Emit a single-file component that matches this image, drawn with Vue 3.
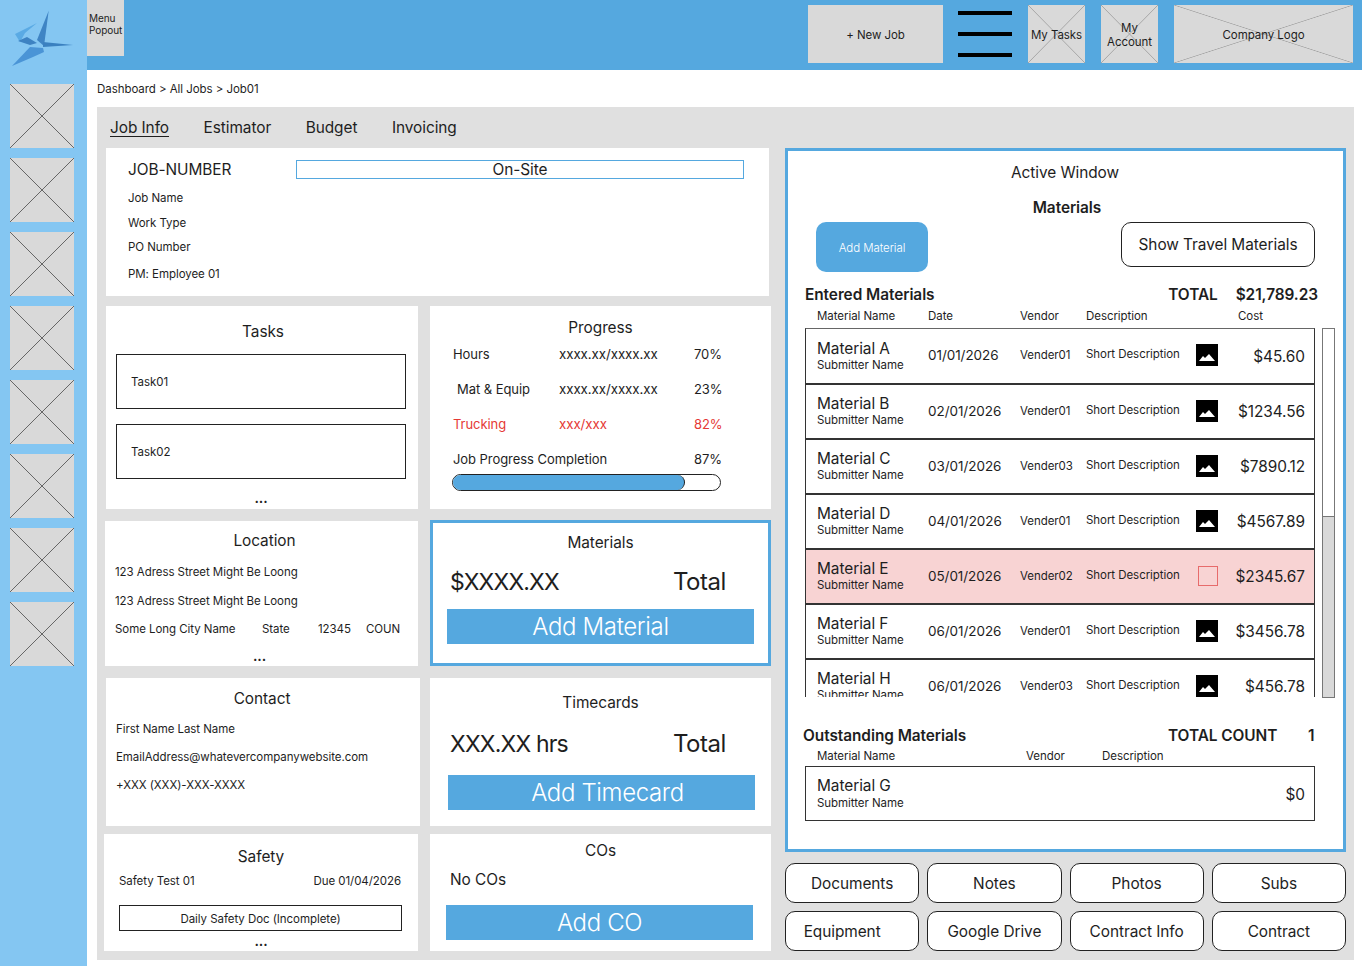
<script setup>
const tiles = Array.from({ length: 8 }, (_, i) => i)
const tabs = ['Job Info', 'Estimator', 'Budget', 'Invoicing']
const progress = [
  { label: 'Hours', value: 'xxxx.xx/xxxx.xx', pct: '70%' },
  { label: 'Mat & Equip', value: 'xxxx.xx/xxxx.xx', pct: '23%', indent: true },
  { label: 'Trucking', value: 'xxx/xxx', pct: '82%', alert: true }
]
const materials = [
  { name: 'Material A', date: '01/01/2026', vendor: 'Vender01', cost: '$45.60' },
  { name: 'Material B', date: '02/01/2026', vendor: 'Vender01', cost: '$1234.56' },
  { name: 'Material C', date: '03/01/2026', vendor: 'Vender03', cost: '$7890.12' },
  { name: 'Material D', date: '04/01/2026', vendor: 'Vender01', cost: '$4567.89' },
  { name: 'Material E', date: '05/01/2026', vendor: 'Vender02', cost: '$2345.67', flagged: true },
  { name: 'Material F', date: '06/01/2026', vendor: 'Vender01', cost: '$3456.78' },
  { name: 'Material H', date: '06/01/2026', vendor: 'Vender03', cost: '$456.78' }
]
const links = ['Documents', 'Notes', 'Photos', 'Subs', 'Equipment', 'Google Drive', 'Contract Info', 'Contract']
const completion = 87
</script>

<template>
  <div class="shell">
    <aside class="sidebar">
      <svg class="logo" width="87" height="84" viewBox="0 0 87 84">
        <polygon points="37,23 15,34 20,42 25,33" fill="#5aaae4" />
        <polygon points="18,41 27,37 37,43 30,45" fill="#3d82c2" />
        <polygon points="48.7,10.7 37,40 44,46" fill="#3f84c4" />
        <polygon points="43,42 73,45 43,47" fill="#3a80c0" />
        <polygon points="12,66 30,47 43,48 44,52 33,57" fill="#4a94d6" />
      </svg>
      <div class="tiles">
        <div v-for="t in tiles" :key="t" class="tile x-dark"></div>
      </div>
    </aside>

    <div class="main">
      <header class="topbar">
        <div class="popout">Menu<br />Popout</div>
        <div class="new-job">+ New Job</div>
        <div class="burger"><i></i><i></i><i></i></div>
        <div class="ph x-light">My Tasks</div>
        <div class="ph x-light">My<br />Account</div>
        <div class="ph company x-light">Company Logo</div>
      </header>

      <div class="crumbs">Dashboard &gt; All Jobs &gt; Job01</div>

      <section class="panel">
        <div class="left">
          <nav class="tabs">
            <span v-for="(t, i) in tabs" :key="t" :class="{ active: i === 0 }">{{ t }}</span>
          </nav>

          <div class="card job">
            <div class="job-head">
              <div class="job-number">JOB-NUMBER</div>
              <div class="status">On-Site</div>
            </div>
            <div class="job-line l1">Job Name</div>
            <div class="job-line l2">Work Type</div>
            <div class="job-line l3">PO Number</div>
            <div class="job-line l4">PM: Employee 01</div>
          </div>

          <div class="row row-a">
            <div class="card tasks">
              <div class="title">Tasks</div>
              <div class="task first">Task01</div>
              <div class="task second">Task02</div>
              <div class="dots">...</div>
            </div>
            <div class="card progress">
              <div class="title">Progress</div>
              <div v-for="p in progress" :key="p.label" class="p-row" :class="{ alert: p.alert }">
                <span class="p-label" :class="{ indent: p.indent }">{{ p.label }}</span>
                <span class="p-val">{{ p.value }}</span>
                <span>{{ p.pct }}</span>
              </div>
              <div class="p-row">
                <span class="p-wide">Job Progress Completion</span>
                <span>{{ completion }}%</span>
              </div>
              <div class="bar"><div class="fill" :style="{ width: completion + '%' }"></div></div>
            </div>
          </div>

          <div class="row row-b">
            <div class="card location">
              <div class="title">Location</div>
              <div class="line">123 Adress Street Might Be Loong</div>
              <div class="line">123 Adress Street Might Be Loong</div>
              <div class="line city">
                <span class="c1">Some Long City Name</span>
                <span class="c2">State</span>
                <span class="c3">12345</span>
                <span>COUN</span>
              </div>
              <div class="dots">...</div>
            </div>
            <div class="card summary mats">
              <div class="title">Materials</div>
              <div class="value-row"><span class="val">$XXXX.XX</span><span>Total</span></div>
              <div class="cta">Add Material</div>
            </div>
          </div>

          <div class="row row-c">
            <div class="card contact">
              <div class="title">Contact</div>
              <div class="line">First Name Last Name</div>
              <div class="line">EmailAddress@whatevercompanywebsite.com</div>
              <div class="line">+XXX (XXX)-XXX-XXXX</div>
            </div>
            <div class="card summary times">
              <div class="title">Timecards</div>
              <div class="value-row"><span class="val">XXX.XX hrs</span><span>Total</span></div>
              <div class="cta">Add Timecard</div>
            </div>
          </div>

          <div class="row row-d">
            <div class="card safety">
              <div class="title">Safety</div>
              <div class="line spread"><span>Safety Test 01</span><span>Due 01/04/2026</span></div>
              <div class="doc">Daily Safety Doc (Incomplete)</div>
              <div class="dots">...</div>
            </div>
            <div class="card summary cos">
              <div class="title">COs</div>
              <div class="none">No COs</div>
              <div class="cta">Add CO</div>
            </div>
          </div>
        </div>

        <div class="right">
          <div class="window">
            <div class="w-title">Active Window</div>
            <div class="w-sub">Materials</div>
            <div class="w-actions">
              <div class="add-btn">Add Material</div>
              <div class="travel-btn">Show Travel Materials</div>
            </div>

            <div class="head entered">
              <span>Entered Materials</span>
              <span class="total">TOTAL</span>
              <span>$21,789.23</span>
            </div>
            <div class="cols">
              <span class="h-name">Material Name</span>
              <span class="h-date">Date</span>
              <span class="h-vendor">Vendor</span>
              <span class="h-desc">Description</span>
              <span>Cost</span>
            </div>

            <div class="list-wrap">
              <div class="list">
                <div v-for="m in materials" :key="m.name" class="m-row" :class="{ flagged: m.flagged }">
                  <div class="who">
                    <div class="m-name">{{ m.name }}</div>
                    <div class="m-sub">Submitter Name</div>
                  </div>
                  <div class="m-date">{{ m.date }}</div>
                  <div class="m-small">{{ m.vendor }}</div>
                  <div class="m-small m-desc">Short Description</div>
                  <div v-if="m.flagged" class="no-img"></div>
                  <svg v-else class="img" width="22" height="22" viewBox="0 0 22 22">
                    <rect width="22" height="22" fill="#000" />
                    <path d="M3 17L7 12L9 14L13 10L19 17Z" fill="#fff" />
                  </svg>
                  <div class="m-cost">{{ m.cost }}</div>
                </div>
              </div>
              <div class="scroll"><div class="thumb"></div></div>
            </div>

            <div class="head outstanding">
              <span>Outstanding Materials</span>
              <span class="count-label">TOTAL COUNT</span>
              <span>1</span>
            </div>
            <div class="cols cols-out">
              <span class="o-name">Material Name</span>
              <span class="o-vendor">Vendor</span>
              <span>Description</span>
            </div>
            <div class="out-row">
              <div class="who">
                <div class="m-name">Material G</div>
                <div class="m-sub">Submitter Name</div>
              </div>
              <div class="m-cost">$0</div>
            </div>
          </div>

          <div class="links">
            <div v-for="l in links" :key="l" class="link">{{ l }}</div>
          </div>
        </div>
      </section>
    </div>
  </div>
</template>

<style scoped>
.shell {
  display: flex;
  width: 1362px;
  height: 966px;
  overflow: hidden;
  background: #fff;
  color: #1e1e1e;
  font-family: Inter, "Liberation Sans", sans-serif;
  font-size: 11.5px;
  letter-spacing: -0.005em;
}
.sidebar {
  width: 87px;
  flex: none;
  background: #84c6f2;
}
.logo { display: block; }
.tiles {
  display: flex;
  flex-direction: column;
  gap: 10px;
  padding-left: 10px;
}
.tile { width: 64px; height: 64px; }
.x-dark {
  background-color: #d9d9d9;
  background-image:
    linear-gradient(to top right, transparent calc(50% - 0.7px), #666 50%, transparent calc(50% + 0.7px)),
    linear-gradient(to bottom right, transparent calc(50% - 0.7px), #666 50%, transparent calc(50% + 0.7px));
}
.x-light {
  background-color: #d9d9d9;
  background-image:
    linear-gradient(to top right, transparent calc(50% - 0.7px), #a6a6a6 50%, transparent calc(50% + 0.7px)),
    linear-gradient(to bottom right, transparent calc(50% - 0.7px), #a6a6a6 50%, transparent calc(50% + 0.7px));
}
.main { flex: 1; min-width: 0; }

.topbar {
  height: 70px;
  background: #55a8df;
  display: flex;
  align-items: flex-start;
  padding-right: 9px;
}
.popout {
  width: 37px;
  height: 56px;
  background: #d9d9d9;
  padding: 13px 0 0 2px;
  box-sizing: border-box;
  font-size: 10px;
  line-height: 11.5px;
}
.new-job, .ph {
  height: 58px;
  margin-top: 5px;
  padding-top: 1px;
  box-sizing: border-box;
  display: flex;
  align-items: center;
  justify-content: center;
  text-align: center;
  line-height: 14px;
}
.new-job {
  width: 135px;
  margin-left: auto;
  background: #d9d9d9;
}
.burger {
  width: 54px;
  height: 46px;
  margin: 11px 16px 0 15px;
  display: flex;
  flex-direction: column;
  justify-content: space-between;
}
.burger i { display: block; height: 4px; background: #000; }
.ph { width: 57px; margin-right: 16px; }
.ph.company { width: 179px; margin-right: 0; }

.crumbs {
  height: 37px;
  padding: 1px 0 0 10px;
  box-sizing: border-box;
  line-height: 36px;
}
.panel {
  width: 1257px;
  height: 853px;
  margin-left: 10px;
  background: #e0e0e0;
  display: flex;
  gap: 14px;
  padding-left: 9px;
  box-sizing: border-box;
}
.left { width: 665px; flex: none; }
.tabs {
  height: 41px;
  display: flex;
  gap: 34.5px;
  align-items: center;
  padding: 1px 0 0 4px;
  box-sizing: border-box;
  font-size: 15.4px;
}
.tabs span { line-height: 20px; }
.tabs .active { text-decoration: underline; text-underline-offset: 3px; }

.card { background: #fff; box-sizing: border-box; }
.title {
  font-size: 15.4px;
  line-height: 20px;
  text-align: center;
  padding-top: 1px;
  margin-bottom: -1px;
}
.line { line-height: 16px; }
.dots { font-size: 14px; line-height: 20px; text-align: center; font-weight: 600; }

.job { width: 663px; height: 148px; padding: 0 25px 0 22px; }
.job-head {
  display: flex;
  padding-top: 12px;
  font-size: 15.4px;
  line-height: 19px;
}
.job-number { width: 168px; }
.status {
  width: 448px;
  height: 19px;
  box-sizing: border-box;
  border: 1px solid #55a8df;
  line-height: 17px;
  text-align: center;
}
.job-line { line-height: 16px; }
.l1 { margin-top: 11px; }
.l2 { margin-top: 9px; }
.l3 { margin-top: 8px; }
.l4 { margin-top: 11px; }

.row {
  display: grid;
  grid-template-columns: 312px 341px;
  gap: 12px;
}
.row-a { margin-top: 10px; height: 203px; }
.row-b { margin-top: 11px; height: 146px; }
.row-c { margin-top: 12px; height: 148px; }
.row-d { margin-top: 8px; height: 117px; }

.tasks { padding-top: 15px; }
.tasks .title { margin-left: 2px; }
.task {
  width: 290px;
  height: 55px;
  margin-left: 10px;
  box-sizing: border-box;
  border: 1px solid #222;
  padding-left: 14px;
  line-height: 55px;
}
.task.first { margin-top: 13px; }
.task.second { margin-top: 15px; }
.tasks .dots { margin-top: 9px; margin-left: -2px; }

.progress { padding: 11px 0 0 23px; }
.progress .title { margin-left: -23px; }
.p-row {
  display: flex;
  margin-top: 15px;
  width: 290px;
  font-size: 13px;
  line-height: 20px;
}
.p-row:nth-child(2) { margin-top: 7px; }
.p-label { width: 106px; flex: none; box-sizing: border-box; }
.p-label.indent { padding-left: 4px; }
.p-wide { width: 241px; flex: none; }
.p-val { width: 135px; flex: none; font-size: 13.3px; }
.alert { color: #e53935; }
.bar {
  width: 269px;
  height: 17px;
  margin: 5px 0 0 -1px;
  box-sizing: border-box;
  border: 1px solid #222;
  border-radius: 9px;
  overflow: hidden;
}
.fill {
  height: 100%;
  background: #55a8df;
  box-sizing: border-box;
  border-right: 1px solid #222;
  border-radius: 0 8px 8px 0;
}

.location { margin: 1px 0 0 -1px; padding: 9px 0 0 10px; }
.location .title { margin-left: -4px; }
.location .line { margin-top: 13px; }
.location .line:nth-child(2) { margin-top: 14px; }
.location .line.city { margin-top: 12px; display: flex; }
.c1 { width: 147px; }
.c2 { width: 56px; }
.c3 { width: 48px; }
.location .dots { margin: 9px 0 0 -14px; }

.contact { margin-right: -2px; padding: 10px 0 0 10px; }
.contact .title { margin-left: -12px; }
.contact .line { margin-top: 12px; }
.contact .line:nth-child(2) { margin-top: 13px; }

.safety { margin: 0 0 0 -2px; padding-top: 12px; }
.safety .line.spread {
  display: flex;
  justify-content: space-between;
  margin: 7px 17px 0 15px;
}
.doc {
  height: 26px;
  margin: 16px 16px 0 15px;
  box-sizing: border-box;
  border: 1px solid #222;
  text-align: center;
  line-height: 26px;
}

.value-row {
  display: flex;
  padding-left: 20px;
  font-size: 24px;
  line-height: 30px;
  letter-spacing: -0.5px;
}
.val { width: 223px; font-size: 23px; letter-spacing: -0.8px; }
.cta {
  width: 307px;
  height: 35px;
  background: #55a8df;
  color: #fff;
  font-size: 24px;
  font-weight: 300;
  line-height: 36px;
  text-align: center;
  letter-spacing: -0.015em;
}
.mats { border: 3px solid #55a8df; padding-top: 9px; }
.mats .value-row { margin-top: 15px; padding-left: 17px; }
.mats .cta { margin: 12px 0 0 14px; }
.times { padding-top: 14px; }
.times .value-row { margin-top: 17px; }
.times .cta { margin: 16px 0 0 18px; padding-left: 12px; box-sizing: border-box; }
.cos { padding-top: 6px; }
.none { margin-top: 10px; margin-bottom: -1px; padding-left: 20px; font-size: 15.4px; line-height: 20px; }
.cos .cta { margin: 16px 0 0 16px; }

.right { width: 561px; flex: none; padding-top: 41px; }
.window {
  height: 704px;
  box-sizing: border-box;
  border: 3px solid #55a8df;
  background: #fff;
}
.w-title { font-size: 15.4px; line-height: 42px; padding-top: 1px; margin: 0 0 -1px -1px; text-align: center; }
.w-sub { font-size: 15.4px; font-weight: 600; line-height: 28px; padding-top: 1px; margin: 0 0 -1px 3px; text-align: center; }
.w-actions {
  display: flex;
  justify-content: space-between;
  align-items: flex-start;
  height: 50px;
  margin-top: 1px;
  padding: 0 28px;
}
.add-btn {
  width: 112px;
  height: 50px;
  border-radius: 10px;
  background: #55a8df;
  color: #fff;
  font-size: 11.5px;
  font-weight: 300;
  line-height: 52px;
  text-align: center;
}
.travel-btn {
  width: 194px;
  height: 45px;
  box-sizing: border-box;
  border: 1px solid #222;
  border-radius: 10px;
  font-size: 15.4px;
  line-height: 43px;
  text-align: center;
}
.head {
  display: flex;
  font-size: 15.4px;
  font-weight: 600;
  line-height: 18px;
}
.entered {
  padding: 14px 25px 5px 17px;
  justify-content: flex-start;
}
.total { margin-left: auto; margin-right: 18px; }
.cols { display: flex; line-height: 14px; padding-left: 29px; }
.h-name { width: 111px; }
.h-date { width: 92px; }
.h-vendor { width: 66px; }
.h-desc { width: 152px; }
.list-wrap { display: flex; margin-top: 5px; height: 370px; }
.list {
  width: 510px;
  margin-left: 17px;
  height: 369px;
  overflow: hidden;
}
.m-row {
  display: flex;
  align-items: center;
  height: 55px;
  box-sizing: border-box;
  border: 1px solid #333;
  border-width: 0 1px 2px;
  padding: 0 9px 2px 11px;
}
.m-row:first-child { height: 57px; border-top: 1px solid #666; }
.m-row.flagged { background: #f8d3d3; }
.who { width: 111px; flex: none; }
.m-name { font-size: 15.4px; line-height: 19px; }
.m-sub { font-size: 11.5px; line-height: 14px; }
.m-date { width: 92px; flex: none; font-size: 13.5px; }
.m-small { width: 66px; flex: none; font-size: 11.5px; }
.m-desc { width: 110px; margin-top: -2px; }
.img { flex: none; }
.no-img {
  width: 20px;
  height: 20px;
  flex: none;
  margin-left: 2px;
  box-sizing: border-box;
  border: 1px solid #e76b6b;
}
.m-cost { margin: 2px 0 0 auto; font-size: 15.4px; }
.scroll {
  width: 13px;
  height: 370px;
  margin-left: 7px;
  box-sizing: border-box;
  border: 1px solid #777;
  background: #fff;
  display: flex;
  flex-direction: column;
  justify-content: flex-end;
}
.thumb { height: 180px; background: #d9d9d9; border-top: 1px solid #777; }
.outstanding { margin-top: 29px; padding-left: 15px; }
.count-label { margin-left: auto; width: 140px; }
.outstanding span:last-child { width: 35px; }
.cols-out { margin-top: 4px; }
.o-name { width: 209px; }
.o-vendor { width: 76px; }
.out-row {
  display: flex;
  align-items: center;
  width: 510px;
  height: 55px;
  margin: 3px 0 0 17px;
  box-sizing: border-box;
  border: 1px solid #333;
  padding: 0 9px 0 11px;
}
.out-row .m-name { line-height: 21px; margin-top: -2px; }
.links {
  display: grid;
  grid-template-columns: repeat(4, 1fr);
  gap: 8px;
  margin-top: 11px;
}
.link {
  height: 40px;
  box-sizing: border-box;
  border: 1px solid #222;
  border-radius: 10px;
  background: #fff;
  font-size: 15.4px;
  line-height: 39px;
  text-align: center;
}
.link:nth-child(5) { padding-right: 20px; }
</style>

<style>
html, body { margin: 0; background: #fff; }
</style>
